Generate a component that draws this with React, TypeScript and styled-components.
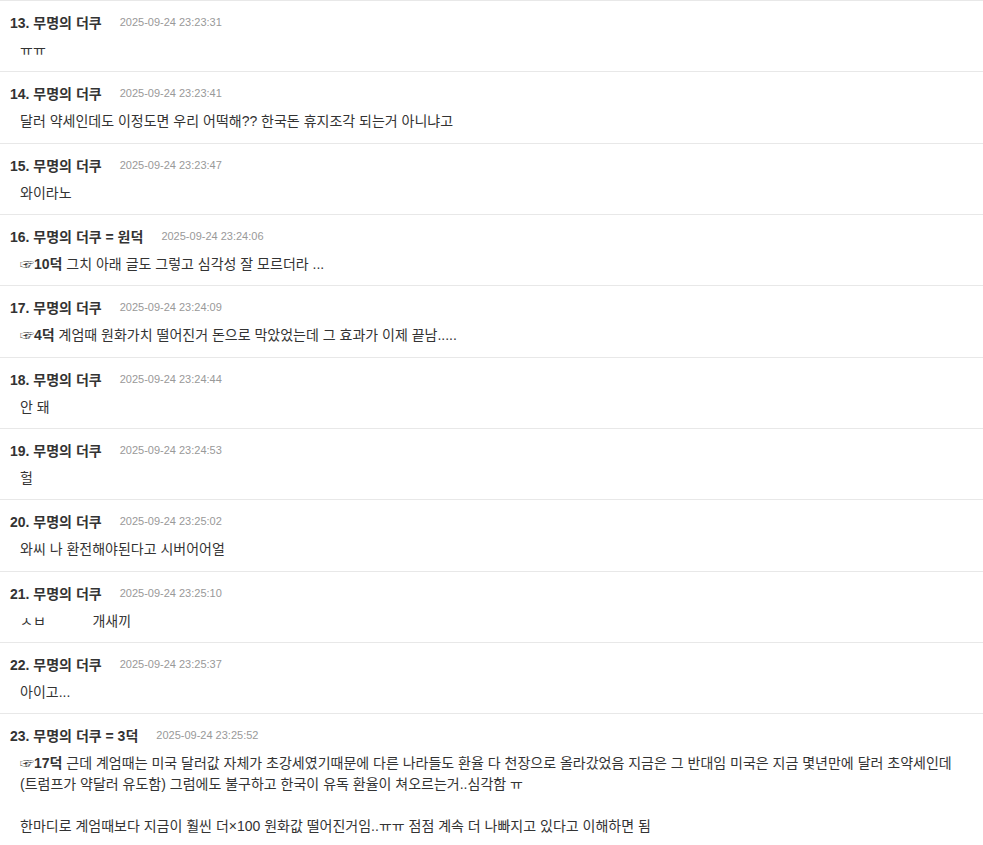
import React from "react";
import styled, { createGlobalStyle } from "styled-components";

const GlobalStyle = createGlobalStyle`
  html, body {
    margin: 0;
    padding: 0;
    background: #fff;
  }
  body {
    font-family: "Liberation Sans", "Noto Sans CJK KR", sans-serif;
    color: #333;
  }
`;

type Comment = {
  no: number;
  name: string;
  date: string;
  reply?: string;
  text: string;
};

const comments: Comment[] = [
  { no: 13, name: "무명의 더쿠", date: "2025-09-24 23:23:31", text: "ㅠㅠ" },
  {
    no: 14,
    name: "무명의 더쿠",
    date: "2025-09-24 23:23:41",
    text: "달러 약세인데도 이정도면 우리 어떡해?? 한국돈 휴지조각 되는거 아니냐고",
  },
  { no: 15, name: "무명의 더쿠", date: "2025-09-24 23:23:47", text: "와이라노" },
  {
    no: 16,
    name: "무명의 더쿠 = 원덕",
    date: "2025-09-24 23:24:06",
    reply: "☞10덕",
    text: " 그치 아래 글도 그렇고 심각성 잘 모르더라 ...",
  },
  {
    no: 17,
    name: "무명의 더쿠",
    date: "2025-09-24 23:24:09",
    reply: "☞4덕",
    text: " 계엄때 원화가치 떨어진거 돈으로 막았었는데 그 효과가 이제 끝남.....",
  },
  { no: 18, name: "무명의 더쿠", date: "2025-09-24 23:24:44", text: "안 돼" },
  { no: 19, name: "무명의 더쿠", date: "2025-09-24 23:24:53", text: "헐" },
  {
    no: 20,
    name: "무명의 더쿠",
    date: "2025-09-24 23:25:02",
    text: "와씨 나 환전해야된다고 시버어어얼",
  },
  {
    no: 21,
    name: "무명의 더쿠",
    date: "2025-09-24 23:25:10",
    text: "ㅅㅂ            개새끼",
  },
  { no: 22, name: "무명의 더쿠", date: "2025-09-24 23:25:37", text: "아이고..." },
  {
    no: 23,
    name: "무명의 더쿠 = 3덕",
    date: "2025-09-24 23:25:52",
    reply: "☞17덕",
    text:
      " 근데 계엄때는 미국 달러값 자체가 초강세였기때문에 다른 나라들도 환율 다 천장으로 올라갔었음 지금은 그 반대임 미국은 지금 몇년만에 달러 초약세인데 (트럼프가 약달러 유도함) 그럼에도 불구하고 한국이 유독 환율이 쳐오르는거..심각함 ㅠ\n\n한마디로 계엄때보다 지금이 훨씬 더×100 원화값 떨어진거임..ㅠㅠ 점점 계속 더 나빠지고 있다고 이해하면 됨",
  },
];

const List = styled.ul`
  list-style: none;
  margin: 0;
  padding: 0;
  border-top: 1px solid #e8e8e8;
`;

const Item = styled.li`
  padding: 11px 6px 10.33px 10px;
  border-bottom: 1px solid #e8e8e8;
`;

const Header = styled.div`
  display: flex;
  align-items: center;
  gap: 18px;
  height: 20px;
`;

const Name = styled.span`
  font-size: 14px;
  font-weight: bold;
  color: #333;
`;

const DateText = styled.span`
  font-size: 11px;
  color: #999;
`;

const Body = styled.div`
  margin-top: 8px;
  padding-left: 10px;
  font-size: 14px;
  line-height: 21px;
  color: #333;
  white-space: pre-wrap;
  word-break: keep-all;
`;

const Reply = styled.b`
  font-weight: bold;
  color: #333;
`;

export default function App() {
  return (
    <>
      <GlobalStyle />
      <List>
        {comments.map((c) => (
          <Item key={c.no}>
            <Header>
              <Name>
                {c.no}. {c.name}
              </Name>
              <DateText>{c.date}</DateText>
            </Header>
            <Body>
              {c.reply && <Reply>{c.reply}</Reply>}
              {c.text}
            </Body>
          </Item>
        ))}
      </List>
    </>
  );
}
